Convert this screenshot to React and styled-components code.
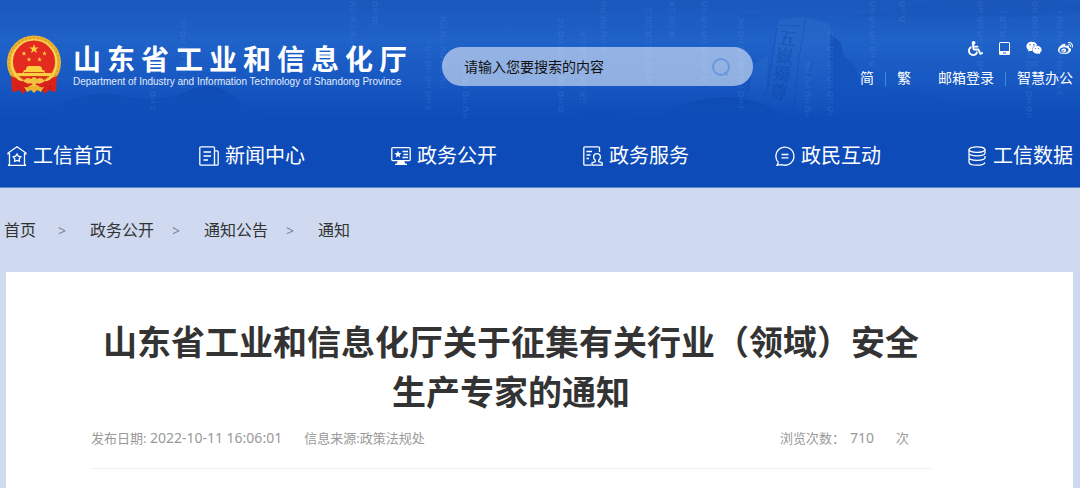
import styled, { createGlobalStyle } from "styled-components"
import { FaWheelchair, FaWeixin, FaWeibo } from "react-icons/fa"

const colors = {
    primary: "#0d4cb8",
    page: "#cfdaf1",
    text: "#333333",
    muted: "#999999",
}

const GlobalStyle = createGlobalStyle`

* {
    box-sizing: border-box;
}

body {
    margin: 0;
    background-color: ${colors.page};
    color: ${colors.text};
    font-family: "Noto Sans", "Noto Sans CJK SC", sans-serif;
}

a {
    color: inherit;
    text-decoration: none;
}
`

const navItems = [
    { label: "工信首页", Icon: HomeIcon },
    { label: "新闻中心", Icon: NewsIcon },
    { label: "政务公开", Icon: ScreenIcon },
    { label: "政务服务", Icon: ServiceIcon },
    { label: "政民互动", Icon: ChatIcon },
    { label: "工信数据", Icon: DataIcon },
]

const crumbs = ["首页", "政务公开", "通知公告", "通知"]

// x, y, height of each column of falling digits
const digitColumns = [
    [440, 15, 75], [463, 60, 60], [558, 18, 95], [580, 28, 76], [601, 0, 55],
    [646, 8, 76], [669, 0, 42], [701, 0, 82], [738, 18, 90], [805, 62, 55],
    [827, 30, 85], [869, 0, 66], [899, 0, 22], [977, 0, 70], [1000, 10, 30],
    [1026, 45, 75], [1032, 0, 66], [1057, 10, 85], [150, 60, 50], [180, 20, 70],
    [350, 0, 70], [372, 0, 26], [425, 40, 70],
]

function Backdrop() {
    return (
        <BackdropSvg viewBox="0 0 1080 125" preserveAspectRatio="xMaxYMin slice" aria-hidden="true">
            <defs>
                <pattern id="digits" width="6" height="15" patternUnits="userSpaceOnUse">
                    <path d="M1 2h4v4h-4zM1 9h4M1 12h4v1" fill="none" stroke="#6fa4ea" strokeWidth="1" />
                </pattern>
                <linearGradient id="hill" x1="0" y1="0" x2="0" y2="1">
                    <stop offset="0" stopColor="#0a45ab" stopOpacity="0.6" />
                    <stop offset="1" stopColor="#0d4cb8" stopOpacity="0" />
                </linearGradient>
                <linearGradient id="stone" x1="0" y1="0" x2="0" y2="1">
                    <stop offset="0" stopColor="#2c6ccb" stopOpacity="0.5" />
                    <stop offset="1" stopColor="#2c6ccb" stopOpacity="0" />
                </linearGradient>
            </defs>
            <path d="M740 14Q850 20 900 8T1080 4V12Q960 24 880 18T740 18Z" fill="#1450b4" opacity="0.25" />
            <path d="M60 105Q90 88 125 96T190 90T250 112L300 120H40Z" fill="url(#hill)" />
            <path d="M560 122Q580 110 600 111T655 117Q680 103 705 99T750 100L800 116L830 124Z" fill="url(#hill)" />
            <path d="M830 118L830 34L840 42L845 58L853 62L860 82L885 88L930 92L960 105L1080 112V122H830Z" fill="url(#hill)" />
            <path d="M766 106L779 20L806 17L830 24V119H792Z" fill="url(#stone)" />
            <path d="M752 66L768 56L766 106L748 100Z" fill="url(#stone)" />
            <path d="M806 18L799 58L793 116M779 25L800 26M777 28L768 84L762 100M752 66L748 92M812 60L808 84" fill="none" stroke="#0c469f" opacity="0.4" />
            <StoneText x="788" y="29" transform="rotate(8 788 29)">五嶽獨尊</StoneText>
            <g fill="url(#digits)" opacity="0.2">
                {digitColumns.map(([x, y, height]) => (
                    <rect key={x} x={x} y={y} width="6" height={height} />
                ))}
            </g>
        </BackdropSvg>
    )
}

function Emblem() {
    const star = "M0-5L1.2-1.6H4.8L1.9.6L3 4L0 1.9L-3 4L-1.9.6L-4.8-1.6H-1.2Z"
    return (
        <EmblemSvg viewBox="0 0 56 60" role="img" aria-label="国徽">
            <path d="M7 43L8 57L13 55L17 59L22 53H34L39 59L43 55L48 57L49 43Z" fill="#d8201c" />
            <path d="M10 46L12 54M45 46L43 54M17 50L19 56M38 50L36 56" stroke="#9f1714" />
            <circle cx="28" cy="27.5" r="27" fill="#edb431" />
            <circle cx="28" cy="27.5" r="25" fill="none" stroke="#d79c28" strokeWidth="1.5" strokeDasharray="2 2" />
            <circle cx="28" cy="27.5" r="22.4" fill="none" stroke="#ffd95e" strokeWidth="1.5" />
            <circle cx="28" cy="26.5" r="21" fill="#e42b20" />
            <g fill="#ffcf3f">
                <path d={star} transform="translate(28 14)" />
                <path d={star} transform="translate(18 18.5) scale(.5)" />
                <path d={star} transform="translate(38.5 18.5) scale(.5)" />
                <path d={star} transform="translate(23 24.5) scale(.5)" />
                <path d={star} transform="translate(33.5 24.5) scale(.5)" />
                <path d="M20 33L22 31H34L36 33V35H38L39 38H46L43 42H13L10 38H17L18 35H20Z" />
            </g>
            <path d="M18 37.5H38M13 41.5H43" stroke="#d04a1c" />
            <path d="M5 41L10 43Q15 49 21 44Q28 38 35 44Q41 49 46 43L51 41L50 57L44 54L45 50Q38 56 33 51L28 49L23 51Q18 56 11 50L12 54L6 57Z" fill="#d8201c" />
            <path d="M17 46Q21 41 25 44Q28 40 31 44Q35 41 39 46Q34 50 31 48Q28 52 25 48Q22 50 17 46Z" fill="#f4c243" />
            <path d="M18 52L24 53L28 51L32 53L38 52L35 57L31 55L28 58L25 55L21 57Z" fill="#edb431" />
        </EmblemSvg>
    )
}

function HomeIcon() {
    return (
        <NavSvg viewBox="0 0 20 20">
            <path d="M1 8.5V7L10 .8L19 7V8.5M2.5 7V17.5Q2.5 19 1 19.5H19Q17.5 19 17.5 17.5V7" />
            <path d="M10 8L11.3 10.2L13.8 10.8L12.2 12.8L12.4 15.3L10 14.4L7.6 15.3L7.8 12.8L6.2 10.8L8.7 10.2Z" />
        </NavSvg>
    )
}

function NewsIcon() {
    return (
        <NavSvg viewBox="0 0 20 20">
            <path d="M15.5 18.5V2Q15.5 .8 14.3 .8H2Q.8 .8 .8 2V18Q.8 19.2 2 19.2H18Q19.2 19.2 19.2 18V6Q19.2 4.8 18 4.8H15.5" />
            <path d="M4.5 6H12M4.5 10H12M4.5 14H9" />
        </NavSvg>
    )
}

function ScreenIcon() {
    return (
        <NavSvg viewBox="0 0 20 20">
            <rect x=".8" y="1.6" width="18.4" height="13" rx="1" />
            <path d="M11.5 5.5H17M12.5 8.5H17M11.5 11.5H17M4 18.3H16" />
            <path d="M7 14.6H13L14.5 18H5.5ZM7 4.5L8 7L10.5 7.2L8.6 8.9L9.2 11.5L7 10.1L4.8 11.5L5.4 8.9L3.5 7.2L6 7Z" fill="currentColor" stroke="none" />
        </NavSvg>
    )
}

function ServiceIcon() {
    return (
        <NavSvg viewBox="0 0 20 20">
            <path d="M16.5 6V2Q16.5 .8 15.3 .8H2Q.8 .8 .8 2V18Q.8 19.2 2 19.2H8" />
            <path d="M3.5 5.5H9M3.5 9H7.5M3.5 12.5H6" />
            <path d="M12.3 14.3Q10.3 12.7 10.6 10.5Q11 7.6 14 7.6T17.4 10.5Q17.7 12.7 15.7 14.3V15.5L19.2 17V19.2H9V17L12.3 15.5Z" />
        </NavSvg>
    )
}

function ChatIcon() {
    return (
        <NavSvg viewBox="0 0 20 20">
            <path d="M3.5 16.5A9 9 0 1 1 7 18.7L2 19.2L3.5 16.5" />
            <path d="M6.5 8.5H13.5M6.5 11.8H13.5" />
        </NavSvg>
    )
}

function DataIcon() {
    return (
        <NavSvg viewBox="0 0 20 20">
            <ellipse cx="10" cy="3.6" rx="8" ry="2.8" />
            <path d="M2 3.6V7Q2 9.8 10 9.8T18 7V3.6M2 8V11.5Q2 14.3 10 14.3T18 11.5V10M2 12.5V16Q2 19.2 10 19.2Q17 19.2 18 16.5" />
        </NavSvg>
    )
}

function App() {

    return (
        <>
            <GlobalStyle />
            <Header>
                <Backdrop />
                <TopBar>
                    <Brand href="#">
                        <Emblem />
                        <BrandText>
                            <BrandName>山东省工业和信息化厅</BrandName>
                            <BrandSub>Department of Industry and Information Technology of Shandong Province</BrandSub>
                        </BrandText>
                    </Brand>
                    <SearchForm role="search" onSubmit={(e) => e.preventDefault()}>
                        <SearchInput type="text" aria-label="搜索" placeholder="请输入您要搜索的内容" />
                        <SearchButton type="submit" aria-label="搜索">
                            <svg viewBox="0 0 20 20" width="20" height="20" fill="none" stroke="#6d97dc" strokeWidth="2">
                                <circle cx="10" cy="10" r="8" />
                                <path d="M13.5 15L16.5 18" />
                            </svg>
                        </SearchButton>
                    </SearchForm>
                    <Tools>
                        <ToolIcons>
                            <a href="#" aria-label="无障碍"><FaWheelchair size={15} /></a>
                            <a href="#" aria-label="手机版">
                                <svg viewBox="0 0 11 13" width="11" height="13">
                                    <path fill="currentColor" fillRule="evenodd" d="M1.5 0H9.5Q11 0 11 1.5V11.5Q11 13 9.5 13H1.5Q0 13 0 11.5V1.5Q0 0 1.5 0ZM1 1V9H10V1ZM4 10.5V11.5H7V10.5Z" />
                                </svg>
                            </a>
                            <a href="#" aria-label="微信"><FaWeixin size={16} /></a>
                            <a href="#" aria-label="微博"><FaWeibo size={15} /></a>
                        </ToolIcons>
                        <ToolLinks>
                            <LinkPair>
                                <a href="#">简</a>
                                <a href="#">繁</a>
                            </LinkPair>
                            <LinkPair>
                                <a href="#">邮箱登录</a>
                                <a href="#">智慧办公</a>
                            </LinkPair>
                        </ToolLinks>
                    </Tools>
                </TopBar>
                <Nav>
                    {navItems.map(({ label, Icon }) => (
                        <NavLink href="#" key={label}>
                            <Icon />
                            {label}
                        </NavLink>
                    ))}
                </Nav>
            </Header>
            <Breadcrumb aria-label="当前位置">
                {crumbs.map((crumb) => (
                    <Crumb href="#" key={crumb}>{crumb}</Crumb>
                ))}
            </Breadcrumb>
            <Card>
                <Article>
                    <Title>山东省工业和信息化厅关于征集有关行业（领域）安全生产专家的通知</Title>
                    <Meta>
                        <span>发布日期: <MetaValue>2022-10-11 16:06:01</MetaValue></span>
                        <span>信息来源:政策法规处</span>
                        <Views>
                            <ViewsLabel>浏览次数：</ViewsLabel>
                            <MetaValue>710</MetaValue>
                            <ViewsUnit>次</ViewsUnit>
                        </Views>
                    </Meta>
                </Article>
            </Card>
        </>
    )
}


const Header = styled.header`

position: relative;
background: linear-gradient(180deg, #1b57bc 0px, #1f62c8 40px, #1758c2 80px, ${colors.primary} 122px);
border-bottom: 1px solid #5f8ad2;
color: #ffffff;
`

const BackdropSvg = styled.svg`

position: absolute;
top: 0;
left: 0;
width: 100%;
height: 125px;
`

const StoneText = styled.text`

fill: #0b3f9c;
opacity: 0.5;
font-family: "Noto Serif CJK SC", "Noto Sans CJK SC", serif;
font-size: 18px;
writing-mode: vertical-rl;
`

const TopBar = styled.div`

position: relative;
display: flex;
align-items: flex-start;
height: 124px;
padding: 35px 7px 0 6px;
`

const Brand = styled.a`

display: flex;
flex-shrink: 0;
gap: 11px;
`

const EmblemSvg = styled.svg`

width: 56px;
height: 60px;
`

const BrandText = styled.div`

display: flex;
flex-direction: column;
padding-top: 7px;
`

const BrandName = styled.span`

font-size: 28px;
font-weight: 700;
line-height: 34px;
letter-spacing: 6px;
`

const BrandSub = styled.span`

font-family: "Liberation Sans", sans-serif;
font-size: 10px;
line-height: 12px;
color: #e3ecfb;
white-space: nowrap;
`

const SearchForm = styled.form`

display: flex;
align-items: center;
flex: 0 1 311px;
height: 39px;
margin: 12px 0 0 29px;
padding: 0 22px;
border-radius: 20px;
background-color: rgba(255, 255, 255, 0.53);
`

const SearchInput = styled.input`

flex: 1;
min-width: 0;
padding: 0;
border: 0;
outline: 0;
background: none;
color: #111111;
font: inherit;
font-size: 14px;

&::placeholder {
    color: #111111;
    opacity: 1;
}
`

const SearchButton = styled.button`

display: flex;
padding: 0;
border: 0;
background: none;
cursor: pointer;
`

const Tools = styled.div`

display: flex;
flex-direction: column;
align-items: flex-end;
gap: 12px;
margin-left: auto;
padding-top: 5px;
`

const ToolIcons = styled.div`

display: flex;
align-items: center;
gap: 16px;
height: 16px;

a {
    display: flex;
}
`

const ToolLinks = styled.div`

display: flex;
gap: 27px;
font-size: 14px;
line-height: 20px;
`

const LinkPair = styled.div`

display: flex;
align-items: center;

a + a::before {
    content: "";
    display: inline-block;
    width: 1px;
    height: 14px;
    margin: 0 11px;
    background-color: #3f8fd8;
    vertical-align: middle;
}
`

const Nav = styled.nav`

position: relative;
display: flex;
justify-content: space-between;
align-items: center;
height: 63px;
padding: 0 7px;
`

const NavLink = styled.a`

display: flex;
align-items: center;
gap: 6px;
font-size: 20px;
line-height: 30px;
`

const NavSvg = styled.svg`

width: 20px;
height: 20px;
fill: none;
stroke: currentColor;
stroke-width: 1.3;
`

const Breadcrumb = styled.nav`

display: flex;
padding: 30px 4px 29px;
font-size: 16px;
line-height: 24px;
`

const Crumb = styled.a`

& + &::before {
    content: ">";
    margin: 0 24px 0 18px;
    color: #7b8494;
    font-size: 14px;
}

&:first-child {
    margin-right: 4px;
}
`

const Card = styled.main`

min-height: 217px;
margin: 0 7px 0 6px;
padding: 45px 142px 0 85px;
background-color: #ffffff;
`

const Article = styled.article`

border-bottom: 1px solid #eeeeee;
`

const Title = styled.h1`

margin: 0;
font-size: 34px;
font-weight: 700;
line-height: 50px;
text-align: center;
`

const Meta = styled.div`

display: flex;
gap: 22px;
padding: 11px 22px 20px 0;
color: ${colors.muted};
font-size: 13px;
line-height: 20px;
`

const MetaValue = styled.span`

font-size: 14px;
`

const Views = styled.span`

display: flex;
margin-left: auto;
`

const ViewsLabel = styled.span`

margin-right: 5px;
`

const ViewsUnit = styled.span`

margin-left: 22px;
`

export default App
